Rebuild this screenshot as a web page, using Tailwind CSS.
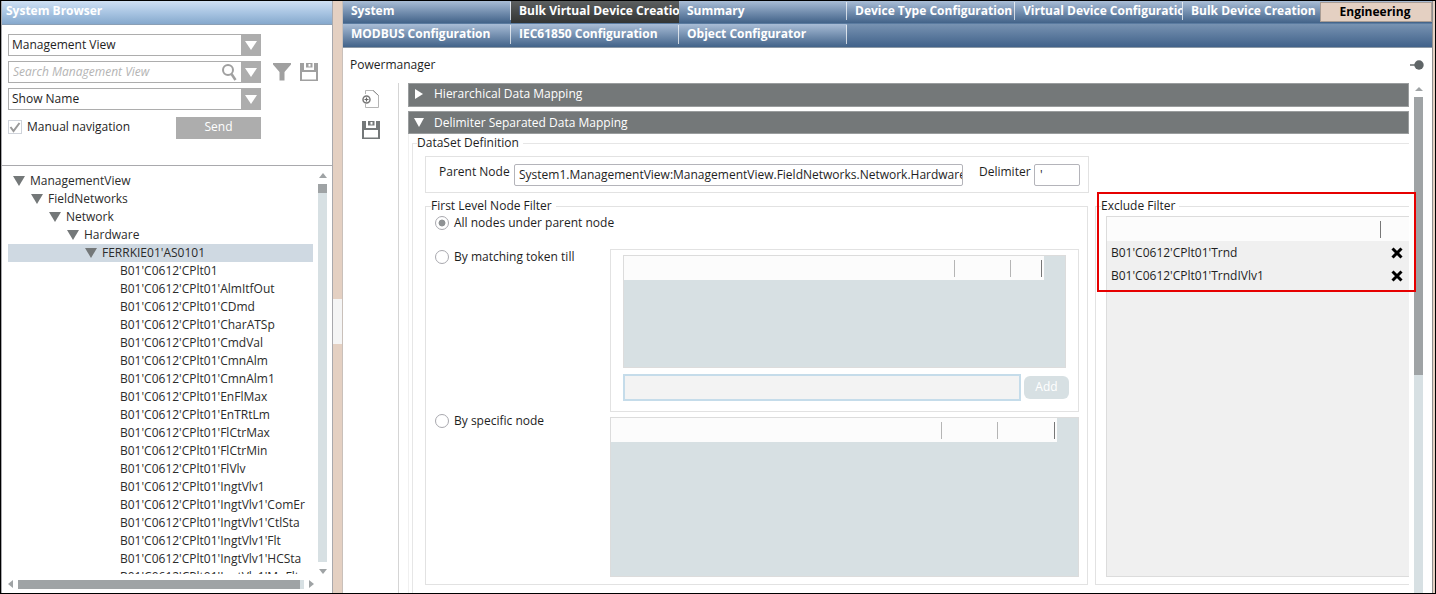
<!DOCTYPE html>
<html lang="en">
<head>
    <meta charset="UTF-8">
    <meta name="viewport" content="width=device-width, initial-scale=1.0">
    <title>System Browser</title>
    <script src="https://cdn.jsdelivr.net/npm/@tailwindcss/browser@4"></script>
</head>
<body class="bg-white">
    <div class="flex h-screen overflow-hidden border border-black bg-white font-['Open_Sans','Noto_Sans',sans-serif] text-[12px] leading-[18px] text-[#1e1e1e]">

        <!-- System Browser -->
        <aside class="flex w-[332px] shrink-0 flex-col border-x border-[#a9a9ad]">
            <h2 class="h-6 shrink-0 border-b border-[#8a9fb5] bg-linear-to-b from-[#cfe0f3] via-[#a9c5e3] to-[#86a9cd] pl-1 text-[12px] leading-5 font-bold text-white">System Browser</h2>

            <div class="flex h-[141px] shrink-0 flex-col gap-[5px] border-b border-[#a9a9ad] px-[6px] pt-[9px]">
                <div class="flex h-[22px] w-[253px]">
                    <select aria-label="View" class="min-w-0 flex-1 appearance-none border border-r-0 border-[#adadad] bg-white px-[3px] leading-[18px]">
                        <option>Management View</option>
                    </select>
                    <span class="flex w-5 items-center justify-center bg-[#adadad]"><svg class="h-[9px] w-3" viewBox="0 0 12 9"><path d="M0 0h12L6 9z" fill="#fff"/></svg></span>
                </div>
                <div class="flex items-center">
                    <div class="flex h-[22px] w-[253px]">
                        <div class="flex min-w-0 flex-1 items-center border border-r-0 border-[#adadad] pr-1">
                            <input type="text" aria-label="Search" placeholder="Search Management View" class="min-w-0 flex-1 px-1 italic placeholder:text-[#b4b4b4]">
                            <svg class="h-[18px] w-4" viewBox="0 0 16 18" fill="none" stroke="#a0a0a0"><circle cx="7" cy="7" r="5" stroke-width="2"/><path d="M10.500 11l4 6" stroke-width="2.500"/></svg>
                        </div>
                        <button aria-label="Search options" class="flex w-5 items-center justify-center bg-[#adadad]"><svg class="h-[9px] w-3" viewBox="0 0 12 9"><path d="M0 0h12L6 9z" fill="#fff"/></svg></button>
                    </div>
                    <button aria-label="Filter" class="ml-3"><svg class="h-[18px] w-[18px]" viewBox="0 0 18 18"><path d="M0 0h18v1.500L11.500 9v8.500h-5V9L0 1.500z" fill="#a0a0a0"/></svg></button>
                    <button aria-label="Save" class="ml-[9px]"><svg class="h-[18px] w-[18px]" viewBox="0 0 18 18"><path fill="#a0a0a0" fill-rule="evenodd" d="M0 0h4v7h10V0h4v18H0zM2 9v7.500h14V9zM6 0h6.500v4.500H6zM8.500 1v2.500h2V1z"/></svg></button>
                </div>
                <div class="flex h-[22px] w-[253px]">
                    <select aria-label="Display" class="min-w-0 flex-1 appearance-none border border-r-0 border-[#adadad] bg-white px-[3px] leading-[18px]">
                        <option>Show Name</option>
                    </select>
                    <span class="flex w-5 items-center justify-center bg-[#adadad]"><svg class="h-[9px] w-3" viewBox="0 0 12 9"><path d="M0 0h12L6 9z" fill="#fff"/></svg></span>
                </div>
                <div class="mt-[2px] flex w-[253px] justify-between">
                    <label class="flex h-5 items-center gap-[5px]">
                        <span class="relative h-[14px] w-[14px]">
                            <input type="checkbox" checked class="block h-[14px] w-[14px] appearance-none border border-[#cfd3da] bg-white">
                            <svg class="pointer-events-none absolute inset-0" viewBox="0 0 14 14" fill="none"><path d="M2.500 7l3 4L11.500 3" stroke="#999" stroke-width="2"/></svg>
                        </span>
                        Manual navigation
                    </label>
                    <button class="h-[22px] w-[85px] bg-[#adadad] pb-[2px] text-white">Send</button>
                </div>
            </div>

            <!-- Tree -->
            <div class="flex min-h-0 flex-1 pr-[5px] pl-[6px]">
                <ul class="mt-[6px] min-w-0 flex-1 overflow-hidden text-[#2b2b2b]">
                    <li class="flex items-center gap-[5px] pl-[5px]"><svg class="h-[10px] w-3" viewBox="0 0 12 10"><path d="M0 0h12L6 10z" fill="#747879"/></svg>ManagementView</li>
                    <li class="flex items-center gap-[5px] pl-[23px]"><svg class="h-[10px] w-3" viewBox="0 0 12 10"><path d="M0 0h12L6 10z" fill="#747879"/></svg>FieldNetworks</li>
                    <li class="flex items-center gap-[5px] pl-[41px]"><svg class="h-[10px] w-3" viewBox="0 0 12 10"><path d="M0 0h12L6 10z" fill="#747879"/></svg>Network</li>
                    <li class="flex items-center gap-[5px] pl-[59px]"><svg class="h-[10px] w-3" viewBox="0 0 12 10"><path d="M0 0h12L6 10z" fill="#747879"/></svg>Hardware</li>
                    <li class="flex items-center gap-[5px] bg-[#cfd9e2] pl-[77px]"><svg class="h-[10px] w-3" viewBox="0 0 12 10"><path d="M0 0h12L6 10z" fill="#747879"/></svg>FERRKIE01'AS0101</li>
                    <li class="pl-28">B01'C0612'CPlt01</li>
                    <li class="pl-28">B01'C0612'CPlt01'AlmItfOut</li>
                    <li class="pl-28">B01'C0612'CPlt01'CDmd</li>
                    <li class="pl-28">B01'C0612'CPlt01'CharATSp</li>
                    <li class="pl-28">B01'C0612'CPlt01'CmdVal</li>
                    <li class="pl-28">B01'C0612'CPlt01'CmnAlm</li>
                    <li class="pl-28">B01'C0612'CPlt01'CmnAlm1</li>
                    <li class="pl-28">B01'C0612'CPlt01'EnFlMax</li>
                    <li class="pl-28">B01'C0612'CPlt01'EnTRtLm</li>
                    <li class="pl-28">B01'C0612'CPlt01'FlCtrMax</li>
                    <li class="pl-28">B01'C0612'CPlt01'FlCtrMin</li>
                    <li class="pl-28">B01'C0612'CPlt01'FlVlv</li>
                    <li class="pl-28">B01'C0612'CPlt01'IngtVlv1</li>
                    <li class="pl-28">B01'C0612'CPlt01'IngtVlv1'ComEr</li>
                    <li class="pl-28">B01'C0612'CPlt01'IngtVlv1'CtlSta</li>
                    <li class="pl-28">B01'C0612'CPlt01'IngtVlv1'Flt</li>
                    <li class="pl-28">B01'C0612'CPlt01'IngtVlv1'HCSta</li>
                    <li class="pl-28">B01'C0612'CPlt01'IngtVlv1'MnFlt</li>
                </ul>
                <div class="ml-[5px] flex w-[9px] flex-col items-center pt-[7px]">
                    <svg class="h-[5px] w-2" viewBox="0 0 8 5"><path d="M0 5h8L4 0z" fill="#9fa3a5"/></svg>
                    <div class="mt-[6px] w-full flex-1 bg-[#d7e0e3]"><div class="h-[9px] bg-[#9fa3a5]"></div></div>
                    <svg class="mt-[7px] h-[5px] w-2" viewBox="0 0 8 5"><path d="M0 0h8L4 5z" fill="#9fa3a5"/></svg>
                </div>
            </div>
            <div class="flex h-[19px] shrink-0 items-center gap-[5px] pt-[1px] pr-[18px] pl-[6px]">
                <svg class="h-2 w-[5px]" viewBox="0 0 5 8"><path d="M5 0v8L0 4z" fill="#9fa3a5"/></svg>
                <div class="h-[9px] flex-1 bg-[#d7e0e3] pr-1"><div class="h-full bg-[#9fa3a5]"></div></div>
                <svg class="h-2 w-[5px]" viewBox="0 0 5 8"><path d="M0 0v8l5-4z" fill="#9fa3a5"/></svg>
            </div>
        </aside>

        <!-- Splitter -->
        <div class="flex w-[10px] shrink-0 flex-col justify-center border-r border-[#c9c0ba] bg-[#e4d0c2] pt-[48px]"><div class="h-[45px] bg-[#f5f5f5]"></div></div>

        <main class="flex min-w-0 flex-1 flex-col border-r border-[#8f8f8f]">
            <!-- Tabs -->
            <nav class="shrink-0 border-b border-[#8c99a6] text-[12px] leading-[18px] font-bold text-white">
                <div class="flex h-[22px] bg-linear-to-b from-[#a9bdd6] to-[#426389]">
                    <a href="#" class="flex w-[168px] shrink-0 py-[3px] whitespace-nowrap"><span class="-mt-[2px] flex-1 overflow-hidden border-r border-white/70 pl-2">System</span></a>
                    <a href="#" class="w-[168px] shrink-0 overflow-hidden bg-linear-to-b from-[#5c5f60] to-[#323433] pt-[1px] pl-2 whitespace-nowrap">Bulk Virtual Device Creation</a>
                    <a href="#" class="flex w-[168px] shrink-0 py-[3px] whitespace-nowrap"><span class="-mt-[2px] flex-1 overflow-hidden border-r border-white/70 pl-2">Summary</span></a>
                    <a href="#" class="flex w-[168px] shrink-0 py-[3px] whitespace-nowrap"><span class="-mt-[2px] flex-1 overflow-hidden border-r border-white/70 pl-2">Device Type Configuration</span></a>
                    <a href="#" class="flex w-[168px] shrink-0 py-[3px] whitespace-nowrap"><span class="-mt-[2px] flex-1 overflow-hidden border-r border-white/70 pl-2">Virtual Device Configuration</span></a>
                    <a href="#" class="min-w-0 flex-1 overflow-hidden pt-[1px] pl-2 whitespace-nowrap">Bulk Device Creation</a>
                    <a href="#" class="mt-[1px] h-5 w-28 shrink-0 border border-[#a89c94] bg-[#e4d0c2] pr-[2px] text-center text-black">Engineering</a>
                </div>
                <div class="flex h-6 border-t border-[#5a7ba0] bg-linear-to-b from-[#7893b2] to-[#41628a]">
                    <a href="#" class="flex w-[168px] shrink-0 bg-linear-to-b from-[#a9bdd6] to-[#426389] py-[3px] whitespace-nowrap"><span class="-mt-[2px] flex-1 border-r border-white/70 pl-2">MODBUS Configuration</span></a>
                    <a href="#" class="flex w-[168px] shrink-0 bg-linear-to-b from-[#a9bdd6] to-[#426389] py-[3px] whitespace-nowrap"><span class="-mt-[2px] flex-1 border-r border-white/70 pl-2">IEC61850 Configuration</span></a>
                    <a href="#" class="flex w-[168px] shrink-0 bg-linear-to-b from-[#a9bdd6] to-[#426389] py-[3px] whitespace-nowrap"><span class="-mt-[2px] flex-1 border-r border-white/70 pl-2">Object Configurator</span></a>
                </div>
            </nav>

            <div class="flex h-[35px] shrink-0 items-center justify-between pr-2 pb-[2px] pl-[7px]">
                <h1>Powermanager</h1>
                <button aria-label="Pin"><svg class="h-[10px] w-[14px]" viewBox="0 0 14 10"><path d="M0 5h5" stroke="#666b6d" stroke-width="1.500"/><circle cx="9" cy="5" r="4.700" fill="#5f6567"/></svg></button>
            </div>

            <div class="flex min-h-0 flex-1">
                <!-- Toolbar -->
                <div class="flex w-14 shrink-0 flex-col items-center gap-[13px] border-r border-[#d5d5d5] pt-[7px]">
                    <button aria-label="New"><svg class="block h-[18px] w-[18px]" viewBox="0 0 18 18" fill="none"><path d="M3.500 4V.5h8l5 5v12h-13V14" stroke="#b5b5b5"/><path d="M11 .5l5.500 5" stroke="#888"/><circle cx="4.500" cy="9.500" r="3.500" stroke="#777" stroke-width="1.500"/><path d="M4.500 7.500v4M2.500 9.500h4" stroke="#666" stroke-width="1.200"/></svg></button>
                    <button aria-label="Save"><svg class="block h-[18px] w-[18px]" viewBox="0 0 18 18"><path fill="#747879" fill-rule="evenodd" d="M0 0h4v7h10V0h4v18H0zM2 9v7.500h14V9zM6 0h6.500v4.500H6zM8.500 1v2.500h2V1z"/></svg></button>
                </div>

                <div class="relative ml-[9px] min-w-0 flex-1">
                    <div class="h-full overflow-hidden">
                        <button class="flex h-6 w-full items-center gap-[10px] border border-[#9a9d9e] bg-[#747879] pb-[2px] pl-[5px] text-white"><svg class="h-[10px] w-[10px]" viewBox="0 0 10 10"><path d="M1 0v10l8-5z" fill="#fff"/></svg>Hierarchical Data Mapping</button>
                        <button class="mt-1 flex h-[23px] w-full items-center gap-[10px] border border-[#9a9d9e] bg-[#747879] pl-[5px] text-white"><svg class="h-[9px] w-[10px]" viewBox="0 0 10 9"><path d="M0 0h10L5 9z" fill="#fff"/></svg>Delimiter Separated Data Mapping</button>

                        <div class="border-l border-[#f0f0f0] pb-4 pl-[3px]">
                            <fieldset class="min-w-0 border border-r-0 border-[#e6e6e6] pb-4 pl-3">
                                <legend class="-ml-2 pr-1">DataSet Definition</legend>

                                <!-- Parent node -->
                                <div class="mt-1 mr-80 flex h-[37px] items-start border border-[#e2e2e2] pt-[7px] pl-[13px]">
                                    <label for="parent" class="w-[75px] shrink-0 leading-4">Parent Node</label>
                                    <input id="parent" type="text" value="System1.ManagementView:ManagementView.FieldNetworks.Network.Hardware.FERRKIE01'AS0101" class="h-[22px] min-w-0 flex-1 rounded-[2px] border border-[#b4b4ba] pr-0 pb-[2px] pl-1">
                                    <label for="delimiter" class="ml-4 w-[55px] shrink-0 leading-4">Delimiter</label>
                                    <input id="delimiter" type="text" value="'" class="mr-2 h-[22px] w-[46px] rounded-[2px] border border-[#b4b4ba] px-[5px] pb-[2px]">
                                </div>

                                <div class="mt-1 flex gap-[7px]">
                                    <!-- First level node filter -->
                                    <fieldset class="min-w-0 flex-1 border border-[#e2e2e2] pr-2 pb-[7px] pl-[9px]">
                                        <legend class="-ml-1 pr-1">First Level Node Filter</legend>
                                        <label class="-mt-[1px] flex items-center gap-[5px]"><input type="radio" name="filter" checked class="h-[14px] w-[14px] appearance-none rounded-full border border-[#a8a8ae] bg-white checked:bg-radial checked:from-[#8f9294] checked:from-35% checked:to-white checked:to-45%">All nodes under parent node</label>
                                        <div class="mt-[17px] grid grid-cols-[175px_1fr]">
                                            <label class="flex h-4 items-center gap-[5px]"><input type="radio" name="filter" class="h-[14px] w-[14px] appearance-none rounded-full border border-[#a8a8ae] bg-white">By matching token till</label>
                                            <div class="border border-[#e2e2e2] pt-[5px] pr-[9px] pb-[10px] pl-3">
                                                <div class="mr-[3px] h-[113px] border border-[#dcdcdc] bg-[#d7e0e3] pr-[21px]">
                                                    <table class="h-6 w-full bg-[#fcfcfc]">
                                                        <thead><tr>
                                                            <th aria-label="Token" class="p-0"><div class="h-[17px] border-r border-[#b5b5b5]"></div></th>
                                                            <th aria-label="Level" class="w-14 p-0"><div class="h-[17px] border-r border-[#b5b5b5]"></div></th>
                                                            <th aria-label="Remove" class="w-[33px] p-0 pr-[2px]"><div class="h-[17px] border-r border-[#777]"></div></th>
                                                        </tr></thead>
                                                    </table>
                                                </div>
                                                <div class="mt-[6px] flex items-center gap-[3px]">
                                                    <input type="text" aria-label="Token" class="h-[27px] min-w-0 flex-1 border-2 border-[#c5dcea] bg-[#f3f3f3] px-1">
                                                    <button class="h-[23px] w-[45px] rounded-md bg-[#d7e0e3] pb-[2px] text-white">Add</button>
                                                </div>
                                            </div>
                                            <label class="flex h-[18px] items-center gap-[5px]"><input type="radio" name="filter" class="h-[14px] w-[14px] appearance-none rounded-full border border-[#a8a8ae] bg-white">By specific node</label>
                                            <div class="mt-[5px] h-[160px] border border-[#dcdcdc] bg-[#d7e0e3] pr-[21px]">
                                                <table class="h-6 w-full bg-[#fcfcfc]">
                                                    <thead><tr>
                                                        <th aria-label="Node" class="p-0"><div class="h-[17px] border-r border-[#b5b5b5]"></div></th>
                                                        <th aria-label="Level" class="w-14 p-0"><div class="h-[17px] border-r border-[#b5b5b5]"></div></th>
                                                        <th aria-label="Remove" class="w-[59px] p-0 pr-[2px]"><div class="h-[17px] border-r border-[#777]"></div></th>
                                                    </tr></thead>
                                                </table>
                                            </div>
                                        </div>
                                    </fieldset>

                                    <!-- Exclude filter -->
                                    <fieldset class="w-[314px] shrink-0 border border-r-0 border-[#e2e2e2] pb-[7px] pl-[10px]">
                                        <legend class="-ml-[5px] pr-1">Exclude Filter</legend>
                                        <div class="mt-[1px] h-[361px] border border-r-0 border-[#dcdcdc] bg-[#f0f0f0]">
                                            <table class="w-full">
                                                <thead><tr class="h-6 bg-[#fcfcfc]">
                                                    <th aria-label="Node" class="p-0"><div class="h-[17px] border-r border-[#777]"></div></th>
                                                    <th aria-label="Remove" class="w-7 p-0"></th>
                                                </tr></thead>
                                                <tbody>
                                                    <tr class="h-[23px]"><td class="p-0 pl-1">B01'C0612'CPlt01'Trnd</td><td class="p-0 pl-[6px]"><button aria-label="Remove" class="block px-1"><svg class="h-3 w-3" viewBox="0 0 12 12"><path d="M1.500 1.500l9 9M10.500 1.500l-9 9" stroke="#000" stroke-width="3"/></svg></button></td></tr>
                                                    <tr class="h-[23px]"><td class="p-0 pl-1">B01'C0612'CPlt01'TrndIVlv1</td><td class="p-0 pl-[6px]"><button aria-label="Remove" class="block px-1"><svg class="h-3 w-3" viewBox="0 0 12 12"><path d="M1.500 1.500l9 9M10.500 1.500l-9 9" stroke="#000" stroke-width="3"/></svg></button></td></tr>
                                                </tbody>
                                            </table>
                                        </div>
                                    </fieldset>
                                </div>
                            </fieldset>
                        </div>
                    </div>
                    <!-- Highlight frame -->
                    <div class="pointer-events-none absolute top-[109px] -right-[7px] z-10 h-[100px] w-[319px] border-2 border-[#e60000]"></div>
                </div>

                <div class="mr-[9px] ml-[5px] flex w-[9px] shrink-0 flex-col items-center pt-1">
                    <svg class="h-[4px] w-2" viewBox="0 0 8 4"><path d="M0 4h8L4 0z" fill="#9fa3a5"/></svg>
                    <div class="mt-[6px] w-full flex-1 bg-[#d7e0e3]"><div class="h-[56%] bg-[#9fa3a5]"></div></div>
                </div>
            </div>
        </main>
        <div class="w-[2px] shrink-0 bg-[#e4d0c2]"></div>
    </div>
</body>
</html>
